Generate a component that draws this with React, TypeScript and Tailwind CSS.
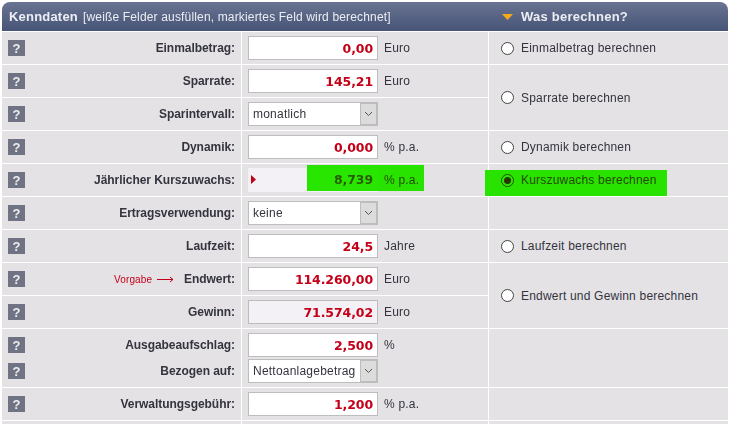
import { ReactNode } from "react";

const ARIAL = "font-['Liberation_Sans',Arial,sans-serif]";

function Help() {
  return (
    <span className="flex h-4 w-[17px] shrink-0 items-center justify-center bg-[#6f7384] text-[13px] font-bold leading-none text-[#eeeeee]">
      ?
    </span>
  );
}

function Label({ children, extra }: { children: ReactNode; extra?: ReactNode }) {
  return (
    <div className="flex items-center pl-[6px] pr-[6px]">
      <Help />
      <div className="ml-auto flex items-center">
        {extra}
        <span className="text-[12px] font-bold tracking-[-0.05px] text-[#34343f]">{children}</span>
      </div>
    </div>
  );
}

function Field({ value, bg = "bg-white" }: { value: string; bg?: string }) {
  return (
    <input
      readOnly
      value={value}
      className={`h-6 w-[130px] border border-[#bdbdbd] ${bg} pr-1 text-right font-['DejaVu_Sans',Verdana,sans-serif] text-[12.5px] font-bold tracking-[-0.1px] text-[#c40018] outline-none`}
    />
  );
}

function Dropdown({ value }: { value: string }) {
  return (
    <div className="flex h-6 w-[130px] border border-[#bdbdbd] bg-white">
      <span className="flex-1 overflow-hidden whitespace-nowrap pl-[4px] text-[12px] leading-[23px] tracking-[0.22px] text-[#34343f]">
        {value}
      </span>
      <span className="flex w-[17px] items-center justify-center border border-[#bdbdbd] bg-[#dcdcdc]">
        <svg width="9" height="6" viewBox="0 0 9 6" fill="none" stroke="#555" strokeWidth="1">
          <path d="M1 1l3.5 3.5L8 1" />
        </svg>
      </span>
    </div>
  );
}

function Unit({ children, className = "text-[#34343f]" }: { children: ReactNode; className?: string }) {
  return <span className={`ml-[6px] text-[12px] tracking-[0.2px] ${className}`}>{children}</span>;
}

function Middle({ children }: { children: ReactNode }) {
  return <div className="relative flex items-center pl-[6px]">{children}</div>;
}

function Choice({ label, checked, className = "" }: { label: string; checked?: boolean; className?: string }) {
  return (
    <div className={`relative flex items-center pl-3 ${className}`}>
      <span className="flex h-[13px] w-[13px] shrink-0 items-center justify-center rounded-full border border-[#444444] bg-white">
        {checked && <span className="h-[7px] w-[7px] rounded-full bg-[#333333]" />}
      </span>
      <span className={`ml-[7px] text-[12px] tracking-[0.2px] ${checked ? "text-[#2c4a18]" : "text-[#34343f]"}`}>{label}</span>
      {checked && (
        <span className="absolute left-[-4px] top-[6px] h-[26px] w-[182px] bg-[#28e600] mix-blend-darken" />
      )}
    </div>
  );
}

export default function App() {
  return (
    <div className={`relative h-[424px] w-[731px] overflow-hidden bg-white pl-[2px] pt-[2px] ${ARIAL}`}>
      <div className="flex h-[29px] w-[726px] items-center rounded-t-[8px] bg-gradient-to-b from-[#6a7492] to-[#465476] text-[#eceef4]">
        <div className="flex w-[486px] items-baseline pl-[7px]">
          <span className="text-[13px] font-bold tracking-[0.2px]">Kenndaten</span>
          <span className="ml-[5px] text-[12px] tracking-[0.16px]">[weiße Felder ausfüllen, markiertes Feld wird berechnet]</span>
        </div>
        <svg width="11" height="6" viewBox="0 0 11 6" className="ml-[14px] shrink-0">
          <path d="M0 0h11L5.5 6z" fill="#f5a91c" />
        </svg>
        <span className="ml-2 text-[13px] font-bold tracking-[0.25px]">Was berechnen?</span>
      </div>

      <div className="mt-px grid w-[726px] grid-cols-[239px_246px_239px] grid-rows-[32px_32px_32px_32px_32px_32px_32px_32px_32px_58px_32px_32px] gap-px bg-white [&>div]:bg-[#e4e2e5]">
        <Label>Einmalbetrag:</Label>
        <Middle><Field value="0,00" /><Unit>Euro</Unit></Middle>
        <Choice label="Einmalbetrag berechnen" />

        <Label>Sparrate:</Label>
        <Middle><Field value="145,21" /><Unit>Euro</Unit></Middle>
        <Choice label="Sparrate berechnen" className="row-span-2" />

        <Label>Sparintervall:</Label>
        <Middle><Dropdown value="monatlich" /></Middle>

        <Label>Dynamik:</Label>
        <Middle><Field value="0,000" /><Unit>% p.a.</Unit></Middle>
        <Choice label="Dynamik berechnen" />

        <Label>Jährlicher Kurszuwachs:</Label>
        <Middle>
          <div className="relative h-6 w-[130px] bg-[#f3f1f5] pr-[5px] text-right font-['DejaVu_Sans',Verdana,sans-serif] text-[12.5px] font-bold leading-6 tracking-[-0.1px] text-[#3c5a20]">
            8,739
            <svg width="5" height="9" viewBox="0 0 5 9" className="absolute left-[3px] top-[7px]">
              <path d="M0 0l5 4.5L0 9z" fill="#c40018" />
            </svg>
          </div>
          <Unit className="text-[#2c4a18]">% p.a.</Unit>
          <span className="absolute left-[65px] top-px h-[26px] w-[117px] bg-[#28e600] mix-blend-darken" />
        </Middle>
        <Choice label="Kurszuwachs berechnen" checked />

        <Label>Ertragsverwendung:</Label>
        <Middle><Dropdown value="keine" /></Middle>
        <div />

        <Label>Laufzeit:</Label>
        <Middle><Field value="24,5" /><Unit>Jahre</Unit></Middle>
        <Choice label="Laufzeit berechnen" />

        <Label
          extra={
            <>
              <span className="text-[10px] tracking-[0.1px] text-[#c40018]">Vorgabe</span>
              <svg width="17" height="7" viewBox="0 0 17 7" className="ml-[5px] mr-[10px]" fill="none" stroke="#c40018">
                <path d="M0 3.5h16M13 1l3 2.5L13 6" />
              </svg>
            </>
          }
        >
          Endwert:
        </Label>
        <Middle><Field value="114.260,00" /><Unit>Euro</Unit></Middle>
        <Choice label="Endwert und Gewinn berechnen" className="row-span-2" />

        <Label>Gewinn:</Label>
        <Middle><Field value="71.574,02" bg="bg-[#f3f1f5]" /><Unit>Euro</Unit></Middle>

        <div className="flex flex-col pt-[3px]">
          <div className="h-[26px] [&>div]:h-full"><Label>Ausgabeaufschlag:</Label></div>
          <div className="h-[26px] [&>div]:h-full"><Label>Bezogen auf:</Label></div>
        </div>
        <div className="flex flex-col gap-[2px] pl-[6px] pt-[4px]">
          <div className="flex items-center"><Field value="2,500" /><Unit>%</Unit></div>
          <Dropdown value="Nettoanlagebetrag" />
        </div>
        <div />

        <Label>Verwaltungsgebühr:</Label>
        <Middle><Field value="1,200" /><Unit>% p.a.</Unit></Middle>
        <div />

        <div />
        <div />
        <div />
      </div>
    </div>
  );
}
